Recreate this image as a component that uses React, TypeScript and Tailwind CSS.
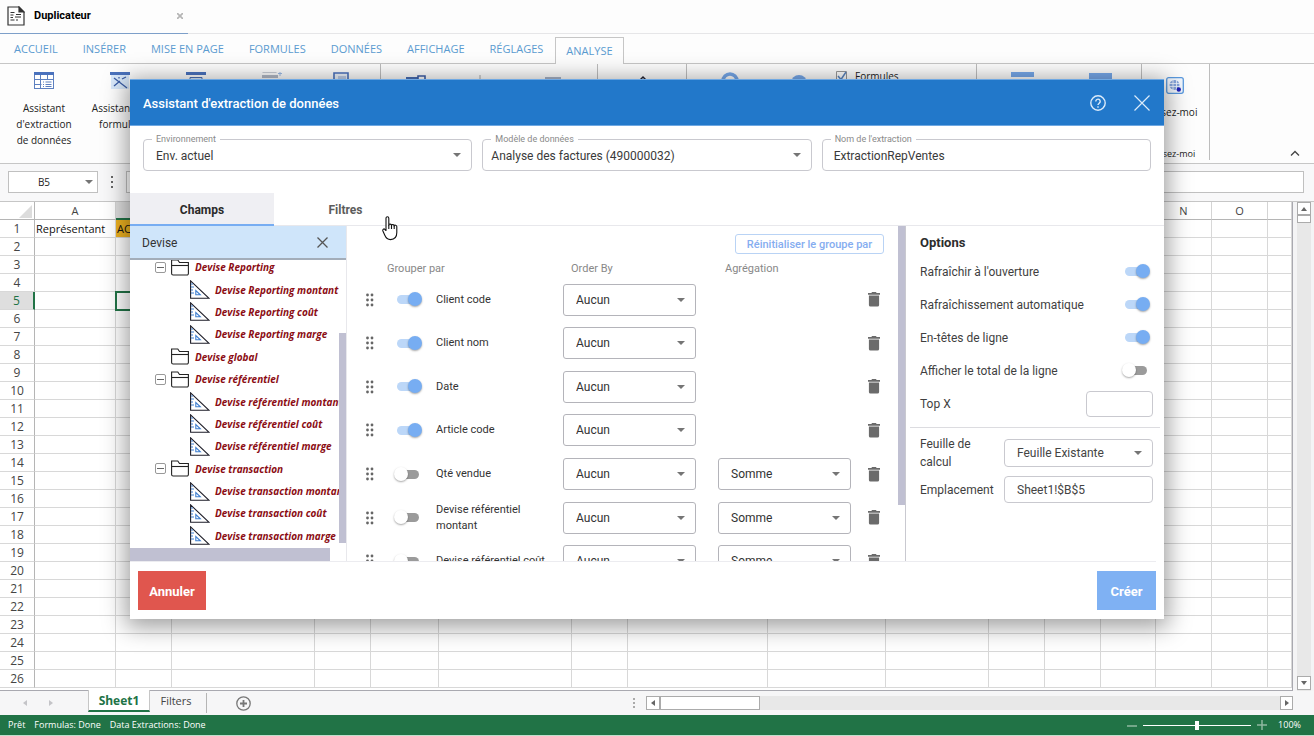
import React from "react";

const UI = "font-['Roboto',sans-serif]";
const SHEET = "font-['Open_Sans','Noto_Sans',sans-serif]";

/* ---------- icons ---------- */

function DocIcon() {
  return (
    <svg width="18" height="20" viewBox="0 0 18 20" fill="none" stroke="#333" strokeWidth="1.2">
      <path d="M1 1h11l5 5v13H1z" />
      <path d="M12 1l5 5h-5z" fill="#333" />
      <path d="M3.500 6.500h4M9 8.500h5M3.500 9h3M8 11h6M3.500 11.500h2.500M3.500 14h4M9 14h2" strokeWidth="1.200" />
    </svg>
  );
}

function TableIcon() {
  return (
    <svg width="20" height="18" viewBox="0 0 20 18" fill="none" stroke="#5d80c0" strokeWidth="1">
      <rect x=".5" y=".5" width="19" height="16" fill="#fff" />
      <path d="M0 0h20v3H0z" fill="#4a72bd" stroke="none" />
      <path d="M.5 7.500h19M.5 12.500h7M6.500 3v13.500M13.500 3v4.500" />
      <path d="M9 10h1M11.500 10h6M9 12.500h1M11.500 12.500h6M9 14.500h1M11.500 14.500h6" />
    </svg>
  );
}

function WandIcon() {
  return (
    <svg width="20" height="18" viewBox="0 0 20 18" fill="none" stroke="#3c5ea8" strokeWidth="1.300">
      <path d="M1 3h18v14H1z" fill="#d9e9fb" stroke="none" />
      <path d="M0 0h20v3H0z" fill="#4a72bd" stroke="none" />
      <path d="M4 6l13 10M4 14l6-5M12 7l4-2M9 5v1.500" />
    </svg>
  );
}

function HeaderBarIcon() {
  return (
    <svg width="20" height="18" viewBox="0 0 20 18" fill="none">
      <path d="M0 0h20v3H0z" fill="#4a72bd" />
      <path d="M4 5.500h12v3H4z" stroke="#4a6fb5" fill="#d9e9fb" />
    </svg>
  );
}

function ListPlusIcon() {
  return (
    <svg width="22" height="20" viewBox="0 0 22 20" fill="none">
      <path d="M2 0h14l-1 1H1z" fill="#c9ced6" />
      <path d="M1 3h16v3H1z" fill="#b4bac6" />
      <path d="M19 -1v5M17 1.500h4" stroke="#9dbbe6" />
    </svg>
  );
}

function PageIcon() {
  return (
    <svg width="16" height="18" viewBox="0 0 16 18" fill="none" stroke="#4a72bd">
      <path d="M1 1h14v16H1z" strokeWidth="1.600" fill="#edf3fb" />
      <path d="M5 5h8M5 7h8" stroke="#8fa9d6" />
    </svg>
  );
}

function GlobeIcon() {
  return (
    <svg width="18" height="17" viewBox="0 0 18 17" fill="none">
      <rect x=".7" y=".7" width="16.600" height="15.600" rx="2" stroke="#5b9be0" strokeWidth="1.300" fill="#f3f8ff" />
      <circle cx="8.500" cy="8" r="5" fill="#86a5dc" />
      <path d="M3 6.500h11M3 9.500h11M7 3v10M10.500 3v10" stroke="#f3f8ff" strokeWidth=".8" />
      <circle cx="12.800" cy="12.500" r="2.200" fill="#2020b8" />
    </svg>
  );
}

function FolderIcon() {
  return (
    <svg className="shrink-0" width="18" height="17" viewBox="0 0 18 17" fill="none" stroke="#222" strokeWidth="1.100">
      <path d="M.6 14.500V1h6.200l1.700 2.500h8.900v11a1.500 1.500 0 0 1-1.500 1.500H2.100A1.500 1.500 0 0 1 .6 14.500z" />
      <path d="M.6 6.500h16.800" />
    </svg>
  );
}

function MeasureIcon() {
  return (
    <svg className="shrink-0" width="20" height="19" viewBox="0 0 20 19" fill="none" stroke="#1d1d28" strokeWidth="1.100">
      <path d="M.6 .9v17.300h18.200z" />
      <path d="M1 4h2M1 7h3M1 10h2M1 13h3" stroke="#3f7fd0" />
      <path d="M5.800 10.500v4.300h4.500z" stroke="#3f7fd0" />
    </svg>
  );
}

function TrashIcon() {
  return (
    <svg width="12" height="15" viewBox="0 0 12 15" fill="#6b6b6b">
      <path d="M4 0h4l.6 1H12v1.700H0V1h3.400zM.9 3.500h10.200V13a1.600 1.600 0 0 1-1.600 1.600h-7A1.600 1.600 0 0 1 .9 13z" />
    </svg>
  );
}

function DragIcon() {
  return (
    <svg width="10" height="14" viewBox="0 0 10 14" fill="#666">
      {[2, 7, 12].map((y) => (
        <g key={y}>
          <circle cx="2.500" cy={y} r="1.400" />
          <circle cx="7" cy={y} r="1.400" />
        </g>
      ))}
    </svg>
  );
}

function Caret({ className }: { className: string }) {
  return (
    <svg className={"pointer-events-none absolute top-1/2 -translate-y-1/2 " + className} width="8" height="4" viewBox="0 0 8 4" fill="#757575">
      <path d="M0 0h8L4 4z" />
    </svg>
  );
}

function Arrow({ d, light }: { d: string; light?: boolean }) {
  return (
    <svg width="6" height="6" viewBox="0 0 6 6" fill={light ? "#c4c4c8" : "#666"}>
      <path d={d} />
    </svg>
  );
}

function HandCursor() {
  return (
    <svg className="pointer-events-none absolute left-[382px] top-[216px]" width="16" height="25" viewBox="0 0 16 25" fill="#fff" stroke="#111" strokeWidth="1.100" strokeLinejoin="round">
      <path d="M4 14.500V2.200C4 .3 6.800.3 6.800 2.200v7c0-1.500 2.700-1.500 2.700.3 0-1.400 2.700-1.200 2.700.5 0-1.300 2.600-1.100 2.600.6v6c0 4-2 7-6.300 7-3.500 0-4.700-2-5.700-4.300L.9 15c-.6-1.600 1.100-2.700 2-1.500z" />
      <path d="M6.800 9v4M9.500 9.500V13M12.200 10v3" fill="none" />
    </svg>
  );
}

/* ---------- spreadsheet ---------- */

const menus = ["ACCUEIL", "INSÉRER", "MISE EN PAGE", "FORMULES", "DONNÉES", "AFFICHAGE", "RÉGLAGES"];

function RibbonButton({ icon, lines, width }: { icon: React.ReactNode; lines?: string[]; width: string }) {
  return (
    <button className={"flex shrink-0 flex-col items-center pt-2 text-[10px] leading-4 text-[#222] " + width} aria-label={lines ? undefined : "Outil"}>
      <span className="mb-[10px] flex h-[18px] justify-center">{icon}</span>
      {lines?.map((l) => (
        <span key={l} className="whitespace-nowrap">{l}</span>
      ))}
    </button>
  );
}

function Ribbon() {
  const group = "flex shrink-0 border-r border-[#bdbdbd] ";
  return (
    <div className="flex h-[100px] shrink-0 border-b border-[#c6c6c6] pb-[3px]">
      <div className={group + "w-[381px] pl-[6px]"}>
        <RibbonButton width="w-[76px]" icon={<TableIcon />} lines={["Assistant", "d'extraction", "de données"]} />
        <RibbonButton width="w-[76px]" icon={<WandIcon />} lines={["Assistant de", "formules"]} />
        <RibbonButton width="w-[76px]" icon={<HeaderBarIcon />} />
        <RibbonButton width="w-[76px]" icon={<ListPlusIcon />} />
        <RibbonButton width="w-[62px]" icon={<PageIcon />} />
      </div>
      <div className={group + "w-[217px]"}>
        <RibbonButton
          width="w-[70px]"
          icon={
            <svg width="20" height="18" viewBox="0 0 20 18" fill="none">
              <path d="M0 5h12v3H0z" fill="#4a6fb5" />
              <path d="M12 4h7v4h-7z" stroke="#3c5ea8" strokeWidth="1.600" />
            </svg>
          }
        />
        <RibbonButton width="w-[58px]" icon={<svg width="4" height="18"><path d="M2 3v10" stroke="#aaa" /></svg>} />
        <RibbonButton width="w-[88px]" icon={<svg width="16" height="18"><path d="M0 5h16v6H0z" fill="#a8b4c8" /></svg>} />
      </div>
      <div className={group + "w-[89px] justify-center"}>
        <RibbonButton width="w-[80px]" icon={<svg width="12" height="18" fill="none" stroke="#223" strokeWidth="1.500"><path d="M3 9l4-4 4 4" /></svg>} />
      </div>
      <div className={group + "w-[290px] pl-[8px]"}>
        <RibbonButton width="w-[70px]" icon={<svg width="18" height="18" fill="none"><circle cx="9" cy="9" r="7" stroke="#76a8ea" strokeWidth="3.500" /></svg>} />
        <RibbonButton width="w-[68px]" icon={<svg width="16" height="18"><circle cx="8" cy="11" r="8" fill="#76a8ea" /></svg>} />
        <label className="flex h-[24px] items-center gap-2 pl-[3px] text-[10px] text-[#222]">
          <input type="checkbox" defaultChecked className="peer sr-only" />
          <svg width="11" height="11" viewBox="0 0 11 11" fill="none">
            <path d="M.5.5h10v10H.5z" stroke="#999" />
            <path d="M2 5l3 3.500L10 1" stroke="#5b84bd" strokeWidth="1.500" />
          </svg>
          Formules
        </label>
      </div>
      <div className={group + "w-[165px] pl-[6px]"}>
        <RibbonButton width="w-[78px]" icon={<svg width="23" height="18"><path d="M0 0h23v5H0z" fill="#76a8ea" /></svg>} />
        <RibbonButton width="w-[78px]" icon={<svg width="23" height="18"><path d="M0 1h23v8H0z" fill="#76a8ea" /></svg>} />
      </div>
      <div className={group + "w-[68px] flex-col items-center justify-between"}>
        <button className="flex flex-col items-center pt-[13px] text-[10px] leading-4 text-[#222]">
          <GlobeIcon />
          <span className="mt-[10px] whitespace-nowrap">Lisez-moi</span>
        </button>
        <span className="whitespace-nowrap text-[9px] leading-3 text-[#222]">Lisez-moi</span>
      </div>
      <div className="flex flex-1 items-end justify-end pb-1 pr-[14px]">
        <button aria-label="Réduire le ruban">
          <svg width="10" height="6" viewBox="0 0 10 6" fill="none" stroke="#444" strokeWidth="1.300"><path d="M1 5.500l4-4 4 4" /></svg>
        </button>
      </div>
    </div>
  );
}

const columns: [string, string][] = [
  ["A", "w-[81px]"], ["B", "w-[56px]"], ["C", "w-[143px]"], ["D", "w-[56px]"], ["E", "w-[68px]"],
  ["F", "w-[133px]"], ["G", "w-[56px]"], ["H", "w-[140px]"], ["I", "w-[118px]"], ["J", "w-[103px]"],
  ["K", "w-[56px]"], ["L", "w-[56px]"], ["M", "w-[55px]"], ["N", "w-[56px]"], ["O", "w-[56px]"], ["", ""],
];

function Sheet() {
  return (
    <div className="flex min-h-0 flex-1 bg-[#f4f4f5]">
      <div className="min-w-0 flex-1 overflow-hidden border-b border-r border-[#a9a9b0] bg-white">
        <table className="w-full table-fixed border-separate border-spacing-0 text-[12px]">
          <colgroup>
            <col className="w-[35px]" />
            {columns.map(([c, w]) => <col key={c} className={w} />)}
          </colgroup>
          <thead>
            <tr className="h-[18px]">
              <th className="border-b border-r border-[#b5b5b5] p-0 align-bottom">
                <svg className="ml-auto mr-[2px]" width="13" height="14" viewBox="0 0 13 14" fill="#dcdcdc"><path d="M13 0v13H0z" /></svg>
              </th>
              {columns.map(([c]) => (
                <th key={c} className={"h-[18px] border-r p-0 text-[11px] leading-4 font-normal text-[#444] " + (c === "B" ? "border-b-2 border-b-[#217346] border-r-[#b5b5b5] bg-[#dedede]" : "border-b border-b-[#b5b5b5] border-r-[#d4d4d4]")}>{c}</th>
              ))}
            </tr>
          </thead>
          <tbody>
            {Array.from({ length: 26 }, (_, i) => i + 1).map((r) => (
              <tr key={r}>
                <th className={"h-[18px] border-b border-b-[#d8d8d8] p-0 font-normal leading-[17px] " + (r === 5 ? "border-r-2 border-r-[#217346] bg-[#dedede] text-[#217346]" : "border-r border-r-[#b5b5b5] text-[#444]")}>{r}</th>
                {columns.map(([c]) => (
                  <td
                    key={c}
                    className={
                      "h-[18px] overflow-hidden whitespace-nowrap border-b border-r border-[#d8d8d8] p-0 pl-px text-[11px] leading-[17px] text-[#111] " +
                      (r === 5 && c === "B" ? "outline-2 -outline-offset-1 outline-[#217346] " : "") +
                      (r === 1 && c === "B" ? "bg-[#edb120]" : "")
                    }
                  >
                    {r === 1 && c === "A" ? "Représentant" : r === 1 && c === "B" ? "AC" : ""}
                  </td>
                ))}
              </tr>
            ))}
          </tbody>
        </table>
      </div>
      <div className="ml-1 mr-[3px] flex w-[14px] flex-col justify-between bg-[#e8e8e8] pb-px">
        <div>
          <button aria-label="Monter" className="flex h-[13px] w-full items-center justify-center border border-[#ababab] bg-white"><Arrow d="M0 5l3-4 3 4z" /></button>
          <div className="h-2 border border-[#ababab] bg-white" />
        </div>
        <button aria-label="Descendre" className="flex h-[14px] w-full items-center justify-center border border-[#ababab] bg-white"><Arrow d="M0 1l3 4 3-4z" /></button>
      </div>
    </div>
  );
}

/* ---------- dialog ---------- */

function OutlinedField({ id, label, value, select }: { id: string; label: string; value: string; select?: boolean }) {
  const box = "block h-8 w-full appearance-none rounded border border-[#c9c9cf] bg-white pr-8 pt-[2px] text-[12px] text-[#3a3a3a] outline-none ";
  return (
    <div className="relative flex-1">
      {select ? (
        <select id={id} className={box + (id === "modele" ? "pl-2" : "pl-3")}><option>{value}</option></select>
      ) : (
        <input id={id} className={box + "pl-[11px]"} defaultValue={value} />
      )}
      <label htmlFor={id} className="absolute -top-[6px] left-[9px] bg-white px-1 text-[9px] leading-3 text-[#8a8a8a]">{label}</label>
      {select && <Caret className="right-[11px]" />}
    </div>
  );
}

function Toggle({ on, label, id }: { on?: boolean; label: string; id: string }) {
  return (
    <input
      id={id}
      type="checkbox"
      role="switch"
      aria-label={label}
      defaultChecked={on}
      className="relative block h-[15px] w-7 shrink-0 appearance-none before:absolute before:left-[3px] before:top-[3px] before:h-[9px] before:w-[22px] before:rounded-full before:bg-[#9b9b9b] checked:before:bg-[#bcd7f8] after:absolute after:left-0 after:top-0 after:size-[14px] after:rounded-full after:bg-white after:shadow-[0_1px_2px_rgba(0,0,0,0.35)] checked:after:left-[14px] checked:after:bg-[#77adf2]"
    />
  );
}

const tree: { label: string; kind: "open" | "folder" | "leaf" }[] = [
  { label: "Devise Reporting", kind: "open" },
  { label: "Devise Reporting montant", kind: "leaf" },
  { label: "Devise Reporting coût", kind: "leaf" },
  { label: "Devise Reporting marge", kind: "leaf" },
  { label: "Devise global", kind: "folder" },
  { label: "Devise référentiel", kind: "open" },
  { label: "Devise référentiel montant", kind: "leaf" },
  { label: "Devise référentiel coût", kind: "leaf" },
  { label: "Devise référentiel marge", kind: "leaf" },
  { label: "Devise transaction", kind: "open" },
  { label: "Devise transaction montant", kind: "leaf" },
  { label: "Devise transaction coût", kind: "leaf" },
  { label: "Devise transaction marge", kind: "leaf" },
];

function TreePanel() {
  return (
    <div className="flex w-[217px] shrink-0 flex-col border-r border-[#e8e8ec]">
      <div className="flex h-[34px] shrink-0 items-center border-b-2 border-[#a3adb9] bg-[#cfe5fa] pl-3 pr-[18px] pt-px">
        <input aria-label="Rechercher un champ" defaultValue="Devise" className="min-w-0 flex-1 bg-transparent text-[12px] text-[#333] outline-none" />
        <button aria-label="Effacer">
          <svg width="11" height="11" viewBox="0 0 11 11" stroke="#555" strokeWidth="1.300"><path d="M.5.5l10 10M10.500.5l-10 10" /></svg>
        </button>
      </div>
      <div className="flex min-h-0 flex-1">
        <div className="flex min-w-0 flex-1 flex-col justify-end overflow-hidden">
          <ul className="flex h-[291px] shrink-0 flex-col">
            {tree.map((n) => (
              <li key={n.label} className={"flex flex-1 items-center " + (n.kind === "leaf" ? "gap-[5px] pl-[60px]" : n.kind === "open" ? "gap-[5px] pl-[25px]" : "pl-[41px]")}>
                {n.kind === "open" && (
                  <button aria-label="Replier" className="flex size-[11px] shrink-0 items-center justify-center rounded-[2px] border border-[#999]">
                    <span className="h-px w-[7px] bg-[#666]" />
                  </button>
                )}
                {n.kind === "leaf" ? <MeasureIcon /> : <FolderIcon />}
                <span className={"whitespace-nowrap font-['Open_Sans',sans-serif] text-[10px] font-bold italic leading-4 text-[#8b0d14] " + (n.kind === "open" ? "pl-px" : n.kind === "folder" ? "pl-[6px]" : "")}>{n.label}</span>
              </li>
            ))}
          </ul>
        </div>
        <div className="flex w-[7px] flex-col justify-end pb-1"><div className="h-[210px] bg-[#c0c0d2]" /></div>
      </div>
      <div className="h-[14px] shrink-0 pt-px"><div className="h-[13px] w-[200px] bg-[#c0c0d2]" /></div>
    </div>
  );
}

const fields: { name: string; on: boolean; agg?: boolean }[] = [
  { name: "Client code", on: true },
  { name: "Client nom", on: true },
  { name: "Date", on: true },
  { name: "Article code", on: true },
  { name: "Qté vendue", on: false, agg: true },
  { name: "Devise référentiel montant", on: false, agg: true },
  { name: "Devise référentiel coût", on: false, agg: true },
];

function CellSelect({ label, value }: { label: string; value: string }) {
  return (
    <div className="relative w-[133px]">
      <select aria-label={label} className="block h-8 w-full appearance-none rounded-[3px] border border-[#b4b4ba] bg-white pl-3 text-[12px] text-[#333] outline-none">
        <option>{value}</option>
      </select>
      <Caret className="right-[11px]" />
    </div>
  );
}

function FieldsPanel() {
  return (
    <div className="flex min-w-0 flex-1 border-r border-[#c9c9d0]">
      <div className="min-w-0 flex-1 overflow-hidden pt-2">
        <div className="flex justify-end pr-[14px]">
          <button className="h-5 w-[149px] whitespace-nowrap rounded-[3px] border border-[#b9d3f5] pt-px text-[11px] font-medium leading-4 text-[#85adf0]">Réinitialiser le groupe par</button>
        </div>
        <table className="mt-[6px] h-[323px] w-full table-fixed text-left">
          <colgroup>
            <col className="w-10" /><col className="w-12" /><col className="w-[128px]" /><col className="w-[155px]" /><col className="w-[150px]" /><col />
          </colgroup>
          <thead>
            <tr className="h-[18px] text-[11px] leading-[18px] text-[#888]">
              <td />
              <th colSpan={2} className="p-0 font-normal">Grouper par</th>
              <th className="p-0 pl-2 font-normal">Order By</th>
              <th className="p-0 pl-[7px] font-normal">Agrégation</th>
              <td />
            </tr>
          </thead>
          <tbody>
            {fields.map((f, i) => (
              <tr key={f.name} className="h-[43px]">
                <td className="p-0 pl-[18px]"><DragIcon /></td>
                <td className="p-0 pl-[7px]"><Toggle on={f.on} id={"grp" + i} label={"Grouper par " + f.name} /></td>
                <td className="p-0 pl-px pr-2 text-[11px] leading-4 text-[#333]"><label className="block" htmlFor={"grp" + i}>{f.name}</label></td>
                <td className="p-0"><CellSelect label={"Ordre " + f.name} value="Aucun" /></td>
                <td className="p-0">{f.agg && <CellSelect label={"Agrégation " + f.name} value="Somme" />}</td>
                <td className="p-0"><button aria-label={"Supprimer " + f.name} className="block"><TrashIcon /></button></td>
              </tr>
            ))}
          </tbody>
        </table>
      </div>
      <div className="w-[7px]"><div className="h-[279px] bg-[#c0c0d2]" /></div>
    </div>
  );
}

const options = [
  { label: "Rafraîchir à l'ouverture", on: true },
  { label: "Rafraîchissement automatique", on: true },
  { label: "En-têtes de ligne", on: true },
  { label: "Afficher le total de la ligne", on: false },
];

function OptionsPanel() {
  const box = "w-full appearance-none rounded border border-[#c9c9cf] bg-white pl-3 text-[12px] text-[#444] outline-none ";
  return (
    <div className="flex w-[258px] shrink-0 flex-col px-1 pt-[6px] text-[12px] text-[#3f3f3f]">
      <div className="pl-[10px] pr-[7px]">
        <h2 className="h-[23px] text-[13px] font-bold leading-[22px] text-[#2d2d2d]">Options</h2>
        {options.map((o, i) => (
          <div key={o.label} className="flex h-[33px] items-center justify-between pr-[3px]">
            <label htmlFor={"opt" + i}>{o.label}</label>
            <Toggle on={o.on} id={"opt" + i} label={o.label} />
          </div>
        ))}
        <div className="flex h-[33px] items-center justify-between">
          <label htmlFor="topx">Top X</label>
          <div className="w-[67px]"><input id="topx" className={box + "h-[26px]"} /></div>
        </div>
      </div>
      <hr className="mt-[7px] border-[#dcdce0]" />
      <div className="flex items-center justify-between pl-[10px] pr-[7px] pt-[7px]">
        <label htmlFor="feuille" className="w-[66px] leading-[18px]">Feuille de calcul</label>
        <div className="relative w-[149px]">
          <select id="feuille" className={box + "h-7"}><option>Feuille Existante</option></select>
          <Caret className="right-[11px]" />
        </div>
      </div>
      <div className="flex items-center justify-between pl-[10px] pr-[7px] pt-[5px]">
        <label htmlFor="emplacement">Emplacement</label>
        <div className="w-[149px]"><input id="emplacement" defaultValue="Sheet1!$B$5" className={box + "h-[27px]"} /></div>
      </div>
    </div>
  );
}

function Dialog() {
  return (
    <div role="dialog" aria-label="Assistant d'extraction de données" className={UI + " flex w-full flex-col bg-white shadow-[0_4px_22px_4px_rgba(0,0,0,0.38)]"}>
      <header className="flex h-[47px] shrink-0 items-center border-y border-[#6fa8e2] bg-[#2278ca] pl-[13px] pr-[14px] text-white">
        <h1 className="flex-1 pt-[2px] text-[13px] font-medium">Assistant d'extraction de données</h1>
        <button aria-label="Aide" className="mr-7">
          <svg width="16" height="16" viewBox="0 0 16 16" fill="none" stroke="#dcebfa" strokeWidth="1.400">
            <circle cx="8" cy="8" r="7.200" />
            <path d="M5.800 6.400a2.200 2.200 0 1 1 3.400 1.800C8.400 8.800 8 9.100 8 10M8 11.200v1.500" />
          </svg>
        </button>
        <button aria-label="Fermer">
          <svg width="16" height="16" viewBox="0 0 16 16" stroke="#dcebfa" strokeWidth="1.200"><path d="M.5.5l15 15M15.500.5l-15 15" /></svg>
        </button>
      </header>
      <div className="flex shrink-0 gap-[10px] px-[13px] pt-[13px]">
        <OutlinedField id="env" label="Environnement" value="Env. actuel" select />
        <OutlinedField id="modele" label="Modèle de données" value="Analyse des factures (490000032)" select />
        <OutlinedField id="nom" label="Nom de l'extraction" value="ExtractionRepVentes" />
      </div>
      <div role="tablist" className="mt-[22px] flex h-[33px] shrink-0 border-b border-[#e8e8ec] text-[12px] font-bold">
        <button role="tab" aria-selected="true" className="-mb-px w-36 border-b-2 border-[#77adf2] bg-[#efeff3] pt-[2px] text-[#2a2a2a]">Champs</button>
        <button role="tab" aria-selected="false" className="w-[143px] pt-px text-[#5c5c5c]">Filtres</button>
      </div>
      <div className="flex h-[335px] shrink-0">
        <TreePanel />
        <FieldsPanel />
        <OptionsPanel />
      </div>
      <footer className="mr-2 flex items-center justify-between border-t border-[#ececf0] pb-[9px] pl-2 pt-[9px] text-[13px] font-bold text-white">
        <button className="h-[39px] w-[68px] bg-[#e0564e] pt-[2px]">Annuler</button>
        <button className="h-[39px] w-[59px] bg-[#7fb1f3] pt-[2px]">Créer</button>
      </footer>
    </div>
  );
}

export default function App() {
  return (
    <div className={SHEET + " relative flex h-screen flex-col overflow-hidden bg-[#fdfdfd]"}>
      <div className="flex h-[34px] shrink-0 border-b border-[#e6e6e8]">
        <div className="-mb-px flex w-[188px] items-center border-b border-[#7d9fc9] pb-px pl-[7px] pr-[5px]">
          <DocIcon />
          <span className={UI + " ml-[9px] flex-1 text-[11px] font-bold leading-4 text-black"}>Duplicateur</span>
          <button aria-label="Fermer l'onglet"><svg width="6" height="6" viewBox="0 0 6 6" stroke="#b5b5b5" strokeWidth="1.700"><path d="M0 0l6 6M6 0L0 6" /></svg></button>
        </div>
      </div>
      <nav className="flex h-[30px] shrink-0 items-center border-b border-[#c6c6c6] pl-[14px] text-[11px] text-[#5b9bd0]">
        <div className="flex gap-[25px] pt-px">
          {menus.map((m) => <a key={m} href="#" className="whitespace-nowrap">{m}</a>)}
        </div>
        <a href="#" className="-mb-px ml-3 mt-[3px] flex h-[27px] items-center border border-b-0 border-[#c6c6c6] bg-[#fdfdfd] px-[10px]">ANALYSE</a>
      </nav>
      <Ribbon />
      <div className="flex h-[38px] shrink-0 items-center border-b border-[#c6c6c6] bg-[#f8f8f9] pb-[2px] pl-2 pr-[10px]">
        <div className="relative">
          <input aria-label="Zone de nom" defaultValue="B5" className="block h-[22px] w-[90px] border border-[#c0c0c0] bg-white pr-[18px] text-center text-[10px] text-[#222]" />
          <Caret className="right-[5px]" />
        </div>
        <svg className="mx-[12px]" width="4" height="14" fill="#666"><path d="M1 1h2v2H1zM1 6h2v2H1zM1 11h2v2H1z" /></svg>
        <input aria-label="Barre de formule" className="h-[22px] flex-1 border border-[#c0c0c0] bg-white" />
      </div>
      <Sheet />
      <div className="flex h-6 shrink-0 bg-[#f6f6f7] text-[12px] text-[#444]">
        <div className="flex w-[88px] items-center gap-5 pl-[22px]"><Arrow light d="M5 0L1 3l4 3z" /><Arrow light d="M1 0l4 3-4 3z" /></div>
        <button className="-mt-px h-[22px] w-[62px] border-x border-b-2 border-x-[#c6c6c6] border-b-[#217346] bg-white pt-px font-bold text-[#217346]">Sheet1</button>
        <button className="my-[2px] w-[57px] border-r border-[#b5b5b5] pb-1 pr-1 text-[11px]">Filters</button>
        <button aria-label="Ajouter une feuille" className="ml-[29px]">
          <svg width="15" height="15" viewBox="0 0 15 15" fill="none" stroke="#777" strokeWidth="1.300"><circle cx="7.500" cy="7.500" r="6.700" /><path d="M4 7.500h7M7.500 4v7" strokeWidth="1.800" /></svg>
        </button>
        <div className="flex flex-1 items-center justify-end pb-px">
          <svg className="mr-[10px]" width="4" height="12" fill="#aaa"><path d="M1 1h2v2H1zM1 5h2v2H1zM1 9h2v2H1z" /></svg>
          <div className="mr-[21px] flex h-[14px] w-[647px] bg-[#e8e8e8]">
            <button aria-label="Gauche" className="flex w-[14px] items-center justify-center border border-[#ababab] bg-white"><Arrow d="M5 0L1 3l4 3z" /></button>
            <div className="w-[100px] border border-[#ababab] bg-white" />
            <button aria-label="Droite" className="ml-auto flex w-[13px] items-center justify-center border border-[#ababab] bg-white"><Arrow d="M1 0l4 3-4 3z" /></button>
          </div>
        </div>
      </div>
      <footer className="flex h-[21px] shrink-0 items-center gap-[9px] border-b border-[#bfe0cd] bg-[#217346] pl-2 pr-[13px] text-[9px] text-white">
        <span>Prêt</span><span>Formulas: Done</span><span className="flex-1">Data Extractions: Done</span>
        <svg width="10" height="10" stroke="#8fb8a0" strokeWidth="1.500"><path d="M0 6h10" /></svg>
        <input type="range" aria-label="Zoom" defaultValue="50" className="-ml-[3px] block h-[11px] w-[108px] appearance-none bg-[linear-gradient(#fff,#fff)] bg-[length:100%_1px] bg-center bg-no-repeat [&::-webkit-slider-thumb]:h-[9px] [&::-webkit-slider-thumb]:w-1 [&::-webkit-slider-thumb]:appearance-none [&::-webkit-slider-thumb]:bg-white" />
        <svg className="-ml-[3px]" width="10" height="10" stroke="#8fb8a0" strokeWidth="1.500"><path d="M0 5h10M5 0v10" /></svg>
        <span className="pl-[2px]">100%</span>
      </footer>
      <div className="absolute inset-x-0 top-[79px] flex pl-[130px] pr-[150px]">
        <Dialog />
      </div>
      <HandCursor />
    </div>
  );
}
